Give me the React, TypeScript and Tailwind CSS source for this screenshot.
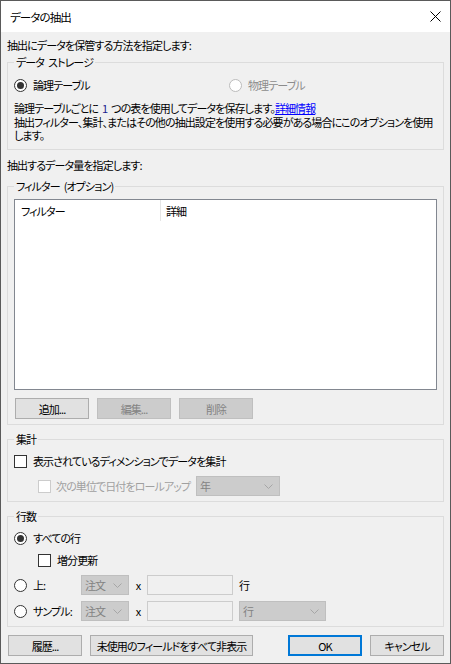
import React from 'react';

function Radio({ checked, disabled }: { checked?: boolean; disabled?: boolean }) {
  return (
    <span
      className={
        disabled
          ? 'w-[13px] h-[13px] rounded-full border border-[#bcbcbc] bg-white shrink-0 flex items-center justify-center'
          : 'w-[13px] h-[13px] rounded-full border border-[#333333] bg-white shrink-0 flex items-center justify-center'
      }
    >
      {checked && <span className="w-[7px] h-[7px] rounded-full bg-[#333333]" />}
    </span>
  );
}

function Check({ disabled }: { disabled?: boolean }) {
  return (
    <span
      className={
        disabled
          ? 'w-[13px] h-[13px] border border-[#cccccc] bg-white shrink-0'
          : 'w-[13px] h-[13px] border border-[#333333] bg-white shrink-0'
      }
    />
  );
}

function Chevron() {
  return (
    <svg width="9" height="5" viewBox="0 0 9 5" className="shrink-0">
      <polyline points="0.5,0.5 4.5,4.5 8.5,0.5" fill="none" stroke="#a6a6a6" strokeWidth="1" />
    </svg>
  );
}

function Combo({ text, w }: { text: string; w: string }) {
  return (
    <div className={`${w} h-[20px] bg-[#cccccc] border border-[#bfbfbf] flex items-center justify-between pl-[3px] pr-[6px] text-[#838383]`}>
      <span>{text}</span>
      <Chevron />
    </div>
  );
}

function Button({ label, disabled, primary, w }: { label: string; disabled?: boolean; primary?: boolean; w: string }) {
  let cls = 'bg-[#e1e1e1] border border-[#adadad] text-black';
  if (disabled) cls = 'bg-[#cccccc] border border-[#bfbfbf] text-[#838383]';
  if (primary) cls = 'bg-[#e1e1e1] border-2 border-[#0078d7] text-black';
  return (
    <div className={`${w} h-[21px] ${cls} flex items-center justify-center shrink-0 whitespace-nowrap`}>
      {label}
    </div>
  );
}

function Group({ label, className, children }: { label: React.ReactNode; className: string; children: React.ReactNode }) {
  return (
    <div className={`relative border border-[#dcdcdc] ${className}`}>
      <span className="absolute left-[6px] -top-[8px] px-[2px] bg-[#f0f0f0] leading-[14px] whitespace-nowrap">{label}</span>
      {children}
    </div>
  );
}

export default function App() {
  return (
    <div className="w-[451px] h-[664px] border border-[#5a5a5a] bg-[#f0f0f0] flex flex-col text-[11px] tracking-[-0.9px] leading-[14px] text-black font-['Noto_Sans_CJK_JP','Noto_Sans',sans-serif] [font-feature-settings:'palt'] whitespace-nowrap">
      {/* title bar */}
      <div className="h-[31px] bg-white flex items-center justify-between pl-[9px] pr-[9px] shrink-0">
        <span className="text-[11.5px]">データの抽出</span>
        <svg width="11" height="11" viewBox="0 0 11 11">
          <path d="M0.5 0.5 L10.5 10.5 M10.5 0.5 L0.5 10.5" stroke="#000" strokeWidth="1" fill="none" />
        </svg>
      </div>

      <div className="flex flex-col px-[6px]">
        <p className="mt-[6px]">抽出にデータを保管する方法を指定します:</p>

        <Group
          label={<>データ<span className="ml-[4px]">ストレージ</span></>}
          className="mt-[10px] h-[88px] pt-[14px] pl-[6px]"
        >
          <div className="flex items-center h-[16px]">
            <div className="w-[215px] flex items-center gap-[6px]">
              <Radio checked />
              <span>論理テーブル</span>
            </div>
            <div className="flex items-center gap-[6px] text-[#8c8c8c]">
              <Radio disabled />
              <span>物理テーブル</span>
            </div>
          </div>
          <p className="mt-[9px] leading-[13.5px]">
            論理テーブルごとに<span className="mx-[4px] text-[#1a1a8c]">1</span>つの表を使用してデータを保存します。
            <span className="text-[#0000ff] underline">詳細情報</span>
            <br />
            抽出フィルター、集計、またはその他の抽出設定を使用する必要がある場合にこのオプションを使用
            <br />
            します。
          </p>
        </Group>

        <p className="mt-[8px]">抽出するデータ量を指定します:</p>

        <Group
          label={<>フィルター<span className="ml-[4px]">(オプション)</span></>}
          className="mt-[14px] h-[239px] pt-[12px] pl-[6px]"
        >
          <div className="w-[423px] h-[191px] bg-white border border-[#828790]">
            <div className="flex h-[21px] items-center">
              <div className="w-[146px] h-full flex items-center pl-[6px] border-r border-[#e5e5e5]">フィルター</div>
              <div className="pl-[5px]">詳細</div>
            </div>
          </div>
          <div className="flex gap-[8px] mt-[8px] ml-[1px]">
            <Button label="追加..." w="w-[74px]" />
            <Button label="編集..." w="w-[74px]" disabled />
            <Button label="削除" w="w-[74px]" disabled />
          </div>
        </Group>

        <Group label="集計" className="mt-[14px] h-[63px] pt-[13px] pl-[6px]">
          <div className="flex items-center h-[16px] gap-[6px]">
            <Check />
            <span>表示されているディメンションでデータを集計</span>
          </div>
          <div className="flex items-center h-[20px] mt-[7px] ml-[24px]">
            <div className="w-[158px] flex items-center gap-[5px] text-[#a0a0a0]">
              <Check disabled />
              <span>次の単位で日付をロールアップ</span>
            </div>
            <Combo text="年" w="w-[84px]" />
          </div>
        </Group>

        <Group label="行数" className="mt-[14px] h-[111px] pt-[13px] pl-[6px]">
          <div className="flex items-center h-[16px] gap-[6px]">
            <Radio checked />
            <span>すべての行</span>
          </div>
          <div className="flex items-center h-[16px] gap-[6px] mt-[6px] ml-[24px]">
            <Check />
            <span>増分更新</span>
          </div>
          <div className="flex items-center h-[20px] mt-[7px]">
            <div className="w-[67px] flex items-center gap-[6px]">
              <Radio />
              <span>上:</span>
            </div>
            <Combo text="注文" w="w-[48px]" />
            <span className="w-[18px] text-center">x</span>
            <div className="w-[86px] h-[20px] border border-[#cccccc] bg-[#f0f0f0]" />
            <span className="ml-[6px]">行</span>
          </div>
          <div className="flex items-center h-[20px] mt-[6px]">
            <div className="w-[67px] flex items-center gap-[6px]">
              <Radio />
              <span>サンプル:</span>
            </div>
            <Combo text="注文" w="w-[48px]" />
            <span className="w-[18px] text-center">x</span>
            <div className="w-[86px] h-[20px] border border-[#cccccc] bg-[#f0f0f0]" />
            <div className="ml-[6px]">
              <Combo text="行" w="w-[87px]" />
            </div>
          </div>
        </Group>

        <div className="flex items-center mt-[8px] ml-[1px]">
          <Button label="履歴..." w="w-[74px]" />
          <div className="ml-[8px]">
            <Button label="未使用のフィールドをすべて非表示" w="w-[163px]" />
          </div>
          <div className="ml-auto flex gap-[8px]">
            <Button label="OK" w="w-[74px]" primary />
            <Button label="キャンセル" w="w-[74px]" />
          </div>
        </div>
      </div>
    </div>
  );
}
